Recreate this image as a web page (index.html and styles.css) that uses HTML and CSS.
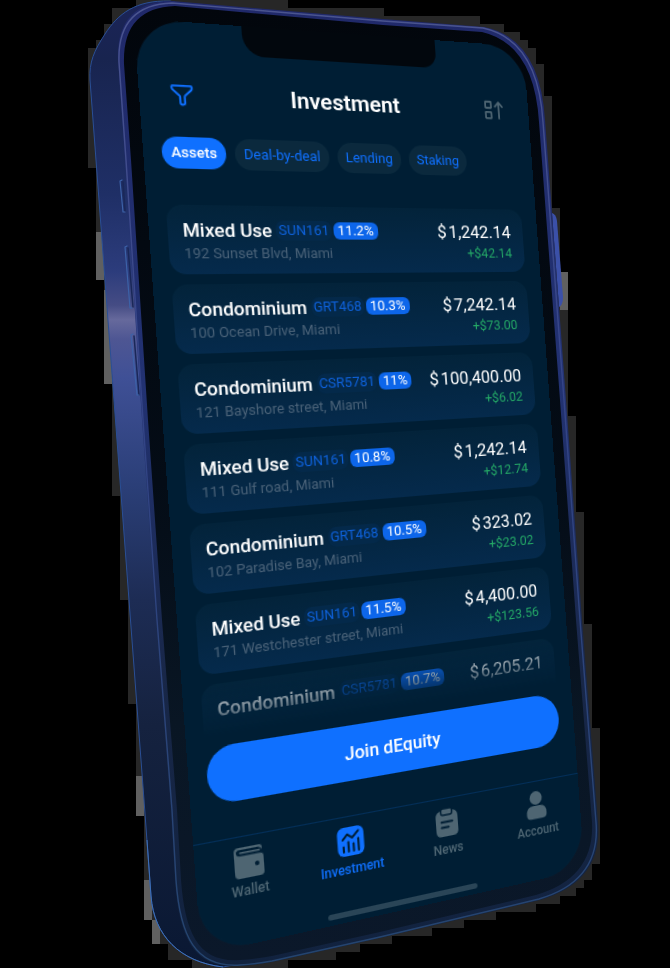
FILE: index.html
```html
<!DOCTYPE html>
<html lang="en">
<head>
<meta charset="utf-8">
<meta name="viewport" content="width=device-width, initial-scale=1">
<title>Investment</title>
<link rel="stylesheet" href="styles.css">
</head>
<body>
<main class="stage">
  <svg class="device" viewBox="0 0 670 968" width="670" height="968" aria-hidden="true">
    <defs>
      <linearGradient id="side" x1="0" y1="0" x2="0" y2="1">
        <stop offset="0" stop-color="#1b2458"/>
        <stop offset=".06" stop-color="#18244f"/>
        <stop offset=".2" stop-color="#1f2f66"/>
        <stop offset=".28" stop-color="#2c3c7c"/>
        <stop offset=".315" stop-color="#454c84"/>
        <stop offset=".33" stop-color="#66699c"/>
        <stop offset=".35" stop-color="#4e5693"/>
        <stop offset=".39" stop-color="#3f5096"/>
        <stop offset=".5" stop-color="#2b3f78"/>
        <stop offset=".62" stop-color="#1d2c54"/>
        <stop offset=".75" stop-color="#15223f"/>
        <stop offset="1" stop-color="#0a1833"/>
      </linearGradient>
      <linearGradient id="rim" x1="0" y1="0" x2="0" y2="1">
        <stop offset="0" stop-color="#20296a"/>
        <stop offset=".4" stop-color="#223272"/>
        <stop offset=".7" stop-color="#182748"/>
        <stop offset="1" stop-color="#11223e"/>
      </linearGradient>
      <linearGradient id="glint" x1="0" y1="0" x2="0" y2="1">
        <stop offset="0" stop-color="#4a548f"/>
        <stop offset=".4" stop-color="#344488"/>
        <stop offset="1" stop-color="#24446e"/>
      </linearGradient>
      <linearGradient id="bezel" x1="0" y1="0" x2="0" y2="1">
        <stop offset="0" stop-color="#02060c"/>
        <stop offset=".5" stop-color="#040c16"/>
        <stop offset=".75" stop-color="#091624"/>
        <stop offset="1" stop-color="#0b182a"/>
      </linearGradient>
    </defs>
    <path fill="#272727" d="M88 48h8v-8h8V24h8V8h24V0h152v8h96v8h96v8h24v8h16v8h8v8h8v16h8v32h8v112h8v64h8v144h8v96h8v112h8v104h8v136h-8v16h-8v8h-8v8h-16v8h-24v8h-40v8h-32v8h-32v8h-40v8h-32v8h-24v8h-48v8H192v-8h-24v-16h-8v-8h-8v-24h-8V816h-8V704h-8V600h-8V496h-8V384h-8V280h-8V168h-8z"/>
    <path fill="#606060" d="M96 232h8v48h-8zM104 290h8v94h-8zM136 776h8v40h-8zM144 880h8v40h-8zM152 920h8v24h-8zM560 272h8v38h-8z"/>
    <path fill="url(#side)" stroke="#2a4f96" stroke-width="1" d="M170 1C135 0 118 14 105 34C94 51 89 62 90 80L113 387L144 800L151 896C154 936 180 962 223 967L260 960L240 20Z"/>
    <path fill="none" stroke="#3e70b8" stroke-width="1" d="M147 840L151 896C154 936 180 962 223 967"/>
    <path fill="#3b50a8" d="M552 213q4 1 5 8l6 76q0 8-4 10z"/>
    <path fill="url(#rim)" d="M172 1Q116 2 118 60L125 160L142 420L156 620L171 810L175 880C179 938 194 970 240 966Q256 965 272 962L380 938L540 900Q603 882 598 822L582 620L566 400L545 120Q540 38 484 27L383 19Z"/>
    <path fill="none" stroke="url(#glint)" stroke-width="1.4" d="M172 3Q117 5 119 62L126 160L143 420L157 620L172 810L176 880C180 936 195 968 240 965Q256 964 272 961L380 937L539 899Q601 881 596 822L580 620L564 400L543 122Q538 40 483 28L383 21Z"/>
    <path fill="url(#bezel)" d="M175 6Q122 8 124 64L131 160L148 420L162 620L177 810L181 880C185 934 199 963 240 960Q256 959 272 956L380 932L536 895Q595 878 592 822L576 620L560 400L539 122Q534 44 482 32L383 25Z"/>
    <g fill="none" stroke="#1a2858" stroke-width="1.5" stroke-linecap="round">
      <path d="M123 182L125 211M128 248L133 307M134 336L139 395"/>
    </g>
    <g fill="none" stroke="#3c62a8" stroke-width="1.2" stroke-linecap="round" stroke-linejoin="round">
      <path d="M122 180l-2 1l3 31h2M127 246l-2 1l5 61h2M133 334l-2 1l6 60h2"/>
    </g>
  </svg>

  <div class="screen">
    <div class="notch" aria-hidden="true"></div>
    <header class="topbar">
      <button class="icon-button accent" type="button" aria-label="Filter">
        <svg viewBox="0 0 24 24"><path d="M3.5 3.2H20.500Q21.600 3.200 21.500 4.400V5.600Q21.400 6.600 20.600 7.300L15 12.400Q14.400 13 14.400 13.800V20Q14.400 21.300 12.500 21.300Q10 21.300 10 19.500V14.200Q10 13.200 9.300 12.500L3.500 7.200Q2.600 6.400 2.500 5.300V4.200Q2.500 3.200 3.500 3.200Z"/></svg>
      </button>
      <h1 class="title">Investment</h1>
      <button class="icon-button muted" type="button" aria-label="Sort">
        <svg viewBox="0 0 24 24"><rect x="2.300" y="3" width="6.500" height="6.500" rx=".5"/><rect x="2.300" y="14" width="6.500" height="6.500" rx=".5"/><path d="M17.500 20.500V4M13.300 8L17.500 3.500L21.700 8"/></svg>
      </button>
    </header>

    <div class="filters">
      <button class="chip chip-active" type="button">Assets</button>
      <button class="chip" type="button">Deal-by-deal</button>
      <button class="chip" type="button">Lending</button>
      <button class="chip" type="button">Staking</button>
    </div>

    <ul class="assets">
      <li class="card">
        <div class="row"><h2 class="name">Mixed Use</h2><span class="code">SUN161</span><span class="rate">11.2%</span><span class="amount"><span class="currency">$</span>1,242.14</span></div>
        <div class="row"><span class="address">192 Sunset Blvd, Miami</span><span class="change">+$42.14</span></div>
      </li>
      <li class="card">
        <div class="row"><h2 class="name">Condominium</h2><span class="code">GRT468</span><span class="rate">10.3%</span><span class="amount"><span class="currency">$</span>7,242.14</span></div>
        <div class="row"><span class="address">100 Ocean Drive, Miami</span><span class="change">+$73.00</span></div>
      </li>
      <li class="card">
        <div class="row"><h2 class="name">Condominium</h2><span class="code">CSR5781</span><span class="rate">11%</span><span class="amount"><span class="currency">$</span>100,400.00</span></div>
        <div class="row"><span class="address">121 Bayshore street, Miami</span><span class="change">+$6.02</span></div>
      </li>
      <li class="card">
        <div class="row"><h2 class="name">Mixed Use</h2><span class="code">SUN161</span><span class="rate">10.8%</span><span class="amount"><span class="currency">$</span>1,242.14</span></div>
        <div class="row"><span class="address">111 Gulf road, Miami</span><span class="change">+$12.74</span></div>
      </li>
      <li class="card">
        <div class="row"><h2 class="name">Condominium</h2><span class="code">GRT468</span><span class="rate">10.5%</span><span class="amount"><span class="currency">$</span>323.02</span></div>
        <div class="row"><span class="address">102 Paradise Bay, Miami</span><span class="change">+$23.02</span></div>
      </li>
      <li class="card">
        <div class="row"><h2 class="name">Mixed Use</h2><span class="code">SUN161</span><span class="rate">11.5%</span><span class="amount"><span class="currency">$</span>4,400.00</span></div>
        <div class="row"><span class="address">171 Westchester street, Miami</span><span class="change">+$123.56</span></div>
      </li>
      <li class="card">
        <div class="row"><h2 class="name">Condominium</h2><span class="code">CSR5781</span><span class="rate">10.7%</span><span class="amount"><span class="currency">$</span>6,205.21</span></div>
      </li>
    </ul>

    <button class="join" type="button">Join dEquity</button>

    <nav class="tabs">
      <a class="tab" href="#wallet">
        <svg viewBox="0 0 28 28"><path fill="currentColor" d="M5 1H23.500Q26 1 26 4V5.500H25Q24.500 3 22.500 3H5.500Q3 3 3 5.500Q3 8.500 6 8.500H24Q27 8.500 27 11.500V24.500Q27 28 23.500 28H5Q1 28 1 24V5Q1 1 5 1Z"/><path fill="none" stroke="#001e34" stroke-width="3.600" stroke-linecap="round" d="M6.500 5.800H24"/><path fill="none" stroke="currentColor" stroke-width="1.600" stroke-linecap="round" d="M6.500 5.800H23.500"/><circle cx="21" cy="17" r="2" fill="#001e34"/></svg>
        Wallet
      </a>
      <a class="tab tab-active" href="#investment" aria-current="page">
        <svg viewBox="0 0 28 28"><rect x="1.500" y="1" width="25" height="26" rx="6" fill="currentColor"/><path fill="none" stroke="#001e34" stroke-width="2" stroke-linecap="round" stroke-linejoin="round" d="M6.500 12L11 7.500L15.500 11L21.500 5.500M7 18.500V23M11.700 14.500V23M16.500 16.500V23M21.200 12.500V23"/></svg>
        Investment
      </a>
      <a class="tab" href="#news">
        <svg viewBox="0 0 28 28"><path fill="currentColor" d="M8 3H20Q25 4 25 9V22Q25 27 20 27H8Q3 27 3 22V9Q3 4 8 3Z"/><rect x="8.500" y="1" width="11" height="6" rx="2" fill="currentColor" stroke="#001e34" stroke-width="1.500"/><path fill="none" stroke="#001e34" stroke-width="1.800" stroke-linecap="round" d="M8.500 13.500H19.500M8.500 18.500H15.500"/></svg>
        News
      </a>
      <a class="tab" href="#account">
        <svg viewBox="0 0 28 28"><circle cx="14" cy="7.500" r="6.500" fill="currentColor"/><path fill="currentColor" d="M3.500 23Q3.500 15 10 15H18Q24.500 15 24.500 23Q24.500 27.500 20 27.500H8Q3.500 27.500 3.500 23Z"/></svg>
        Account
      </a>
    </nav>
    <div class="home-indicator" aria-hidden="true"></div>
  </div>
</main>
</body>
</html>
```
FILE: styles.css
```css
:root {
  --screen: #001e34;
  --accent: #0f70ff;
  --muted: #4e6572;
}

* {
  box-sizing: border-box;
}

body {
  margin: 0;
  background: #000;
  color: #fff;
  font-family: Roboto, "Liberation Sans", sans-serif;
}

button {
  border: 0;
  padding: 0;
  background: none;
  font: inherit;
}

/* The device art and the screen share one centred grid cell. */
.stage {
  display: grid;
  grid-template: minmax(100vh, auto) / minmax(0, 1fr);
  place-items: center;
  overflow: hidden;
}

.device,
.screen {
  grid-area: 1 / 1;
}

.device {
  display: block;
}

/* The screen is laid out flat, then set in perspective on the device face. */
.screen {
  position: relative;
  display: flex;
  flex-direction: column;
  width: 374px;
  height: 812px;
  padding: 48px 16px 0;
  overflow: hidden;
  border-radius: 44px;
  background: var(--screen);
  transform-origin: 0 0;
  transform: matrix3d(1.180507, 0.063797, 0, 0.000368404, 0.0828659, 1.147454, 0, -0.00000725493, 0, 0, 1, 0, -14.5, -59.7, 0, 1);
}

.notch {
  position: absolute;
  top: 0;
  left: 50%;
  width: 186px;
  height: 27px;
  margin-left: -93px;
  border-radius: 0 0 14px 20px;
  background: #02070d;
}

.topbar {
  display: flex;
  align-items: center;
  justify-content: space-between;
  height: 34px;
  padding: 0 10px;
}

.title {
  margin: 0;
  font-size: 21px;
  font-weight: 600;
  line-height: 24px;
}

.icon-button {
  width: 22px;
  height: 22px;
}

.icon-button svg {
  display: block;
  fill: none;
  stroke: currentColor;
  stroke-width: 2;
  stroke-linecap: round;
  stroke-linejoin: round;
}

.accent {
  color: var(--accent);
}

.muted {
  color: var(--muted);
}

.filters {
  display: flex;
  gap: 8px;
  margin-top: 20px;
}

.chip {
  height: 28px;
  padding: 0 8px;
  border-radius: 14px;
  background: #0b293d;
  color: var(--accent);
  font-size: 13px;
  font-weight: 400;
  line-height: 28px;
}

.chip-active {
  background: var(--accent);
  color: #fff;
  font-weight: 500;
}

.assets {
  display: flex;
  flex-direction: column;
  gap: 9px;
  height: 466px;
  margin: 32px 0 0;
  padding: 0;
  overflow: hidden;
  list-style: none;
  mask-image: linear-gradient(#000 420px, transparent 464px);
}

.card {
  flex: none;
  height: 61px;
  padding: 12px 13px 0;
  border-radius: 14px;
  background: linear-gradient(#03233a, #052a4c);
}

.row {
  display: flex;
  align-items: center;
  height: 20px;
}

.name {
  margin: 0 6px 0 0;
  font-size: 17px;
  font-weight: 500;
  line-height: 20px;
}

.code {
  margin-right: 4px;
  border-radius: 5px;
  background: #04294a;
  box-shadow: 0 0 0 2px #04294a;
  color: #0e62dc;
  font-size: 13px;
  line-height: 14px;
}

.rate {
  padding: 0 4px;
  border-radius: 6px;
  background: #0d66ea;
  font-size: 13px;
  line-height: 16px;
}

.amount {
  display: flex;
  gap: 2px;
  margin-left: auto;
  font-size: 17px;
  line-height: 20px;
}

.address {
  color: #4a6278;
  font-size: 13px;
}

.change {
  margin-left: auto;
  color: #24a866;
  font-size: 13px;
}

.join {
  height: 50px;
  margin-top: 8px;
  border-radius: 25px;
  background: var(--accent);
  color: #fff;
  font-size: 17px;
  font-weight: 500;
}

.tabs {
  display: grid;
  grid-template-columns: repeat(4, 1fr);
  margin: 31px -16px 0;
  padding-top: 8px;
  border-top: 1px solid #032e58;
}

.tab {
  display: flex;
  flex-direction: column;
  align-items: center;
  gap: 3px;
  color: var(--muted);
  font-size: 12px;
  font-weight: 500;
  line-height: 16px;
  text-decoration: none;
}

.tab svg {
  width: 28px;
  height: 28px;
}

.tab-active {
  color: var(--accent);
}

.home-indicator {
  width: 146px;
  height: 5px;
  margin: auto auto 5px;
  border-radius: 3px;
  background: #2a4557;
}
```
